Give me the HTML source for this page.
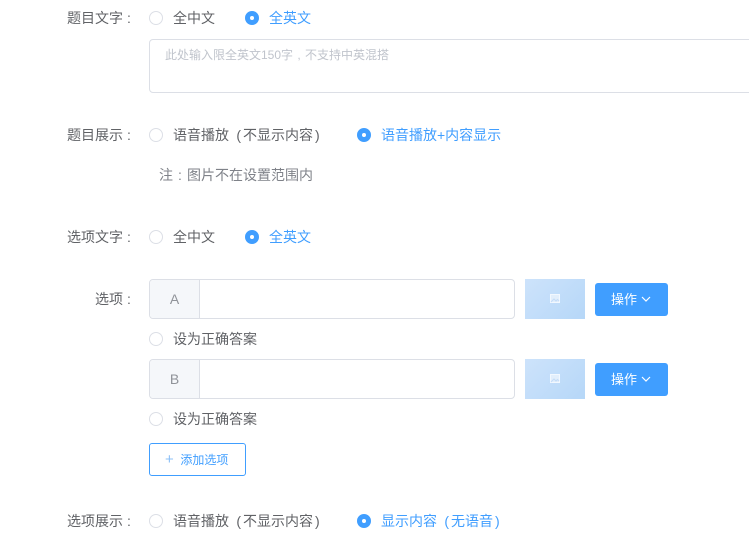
<!DOCTYPE html>
<html><head><meta charset="utf-8"><style>
*{margin:0;padding:0;box-sizing:border-box}
body{width:749px;height:548px;overflow:hidden;background:#fff;font-family:"Liberation Sans","Noto Sans CJK SC",sans-serif;font-size:14px;color:#606266;position:relative}
.a{position:absolute;white-space:nowrap;line-height:16px}
.lbl{right:614px;text-align:right}
.f{display:inline-block;width:14px;text-align:center}
.lbl .f{width:12px}
.fl{display:inline-block;width:14px;text-align:right;padding-right:2px}
.fr{display:inline-block;width:14px;text-align:left;padding-left:2px}
.r{position:absolute;width:14px;height:14px;border:1px solid #dcdfe6;border-radius:50%;background:#fff}
.r.on{border-color:#409eff;background:#409eff}
.r.on::after{content:"";position:absolute;left:4px;top:4px;width:4px;height:4px;border-radius:50%;background:#fff}
.blue{color:#409eff}
.box{position:absolute;border:1px solid #dcdfe6;border-radius:4px;background:#fff}
.pre{position:absolute;left:0;top:0;bottom:0;width:50px;background:#f5f7fa;border-right:1px solid #dcdfe6;border-radius:4px 0 0 4px;text-align:center;line-height:38px;color:#909399;font-size:14px}
.img{position:absolute;width:60px;height:40px;background:linear-gradient(135deg,#cde3fb,#b6d7f8)}
.img svg{position:absolute;left:25px;top:15px}
.op{position:absolute;width:73px;height:33px;background:#409eff;border-radius:3px;color:#fff;font-size:13px;line-height:33px;padding-left:16px}
.op svg{position:absolute;left:46px;top:13px}
</style></head><body>
<div class="a lbl" style="top:10px">题目文字<span class="f">:</span></div>
<div class="r" style="left:149px;top:11px"></div><div class="a" style="left:173px;top:10px">全中文</div>
<div class="r on" style="left:245px;top:11px"></div><div class="a blue" style="left:269px;top:10px">全英文</div>
<div class="box" style="left:149px;top:39px;width:620px;height:54px"></div>
<div class="a" style="left:165px;top:47px;font-size:12px;color:#c0c4cc">此处输入限全英文150字<span style="display:inline-block;width:12px;text-align:center">,</span>不支持中英混搭</div>

<div class="a lbl" style="top:127px">题目展示<span class="f">:</span></div>
<div class="r" style="left:149px;top:128px"></div><div class="a" style="left:173px;top:127px">语音播放<span class="fl">(</span>不显示内容<span class="fr">)</span></div>
<div class="r on" style="left:357px;top:128px"></div><div class="a blue" style="left:381px;top:127px">语音播放+内容显示</div>
<div class="a" style="left:159px;top:167px;color:#7f8289">注<span class="f">:</span>图片不在设置范围内</div>

<div class="a lbl" style="top:229px">选项文字<span class="f">:</span></div>
<div class="r" style="left:149px;top:230px"></div><div class="a" style="left:173px;top:229px">全中文</div>
<div class="r on" style="left:245px;top:230px"></div><div class="a blue" style="left:269px;top:229px">全英文</div>

<div class="a lbl" style="top:291px">选项<span class="f">:</span></div>
<div class="box" style="left:149px;top:279px;width:366px;height:40px"><div class="pre">A</div></div>
<div class="img" style="left:525px;top:279px"><svg width="10" height="9" viewBox="0 0 10 9"><rect x="0.5" y="0.5" width="9" height="8" fill="#e3effc" stroke="#f2f8ff"/><path d="M1 8l3-3 2 2 1.5-1.5L9 7" fill="none" stroke="#c4dcf7"/></svg></div>
<div class="op" style="left:595px;top:283px">操作<svg width="10" height="7" viewBox="0 0 10 7"><path d="M1 1l4 4 4-4" fill="none" stroke="#fff" stroke-width="1.2"/></svg></div>
<div class="r" style="left:149px;top:332px"></div><div class="a" style="left:173px;top:331px">设为正确答案</div>

<div class="box" style="left:149px;top:359px;width:366px;height:40px"><div class="pre">B</div></div>
<div class="img" style="left:525px;top:359px"><svg width="10" height="9" viewBox="0 0 10 9"><rect x="0.5" y="0.5" width="9" height="8" fill="#e3effc" stroke="#f2f8ff"/><path d="M1 8l3-3 2 2 1.5-1.5L9 7" fill="none" stroke="#c4dcf7"/></svg></div>
<div class="op" style="left:595px;top:363px">操作<svg width="10" height="7" viewBox="0 0 10 7"><path d="M1 1l4 4 4-4" fill="none" stroke="#fff" stroke-width="1.2"/></svg></div>
<div class="r" style="left:149px;top:412px"></div><div class="a" style="left:173px;top:411px">设为正确答案</div>

<div style="position:absolute;left:149px;top:443px;width:97px;height:33px;border:1px solid #409eff;border-radius:3px;color:#409eff;font-size:12px;line-height:31px;padding-left:15px"><span style="color:#8cc0f7;font-size:15px">+</span>&nbsp; 添加选项</div>

<div class="a lbl" style="top:513px">选项展示<span class="f">:</span></div>
<div class="r" style="left:149px;top:514px"></div><div class="a" style="left:173px;top:513px">语音播放<span class="fl">(</span>不显示内容<span class="fr">)</span></div>
<div class="r on" style="left:357px;top:514px"></div><div class="a blue" style="left:381px;top:513px">显示内容<span class="fl">(</span>无语音<span class="fr">)</span></div>
</body></html>
